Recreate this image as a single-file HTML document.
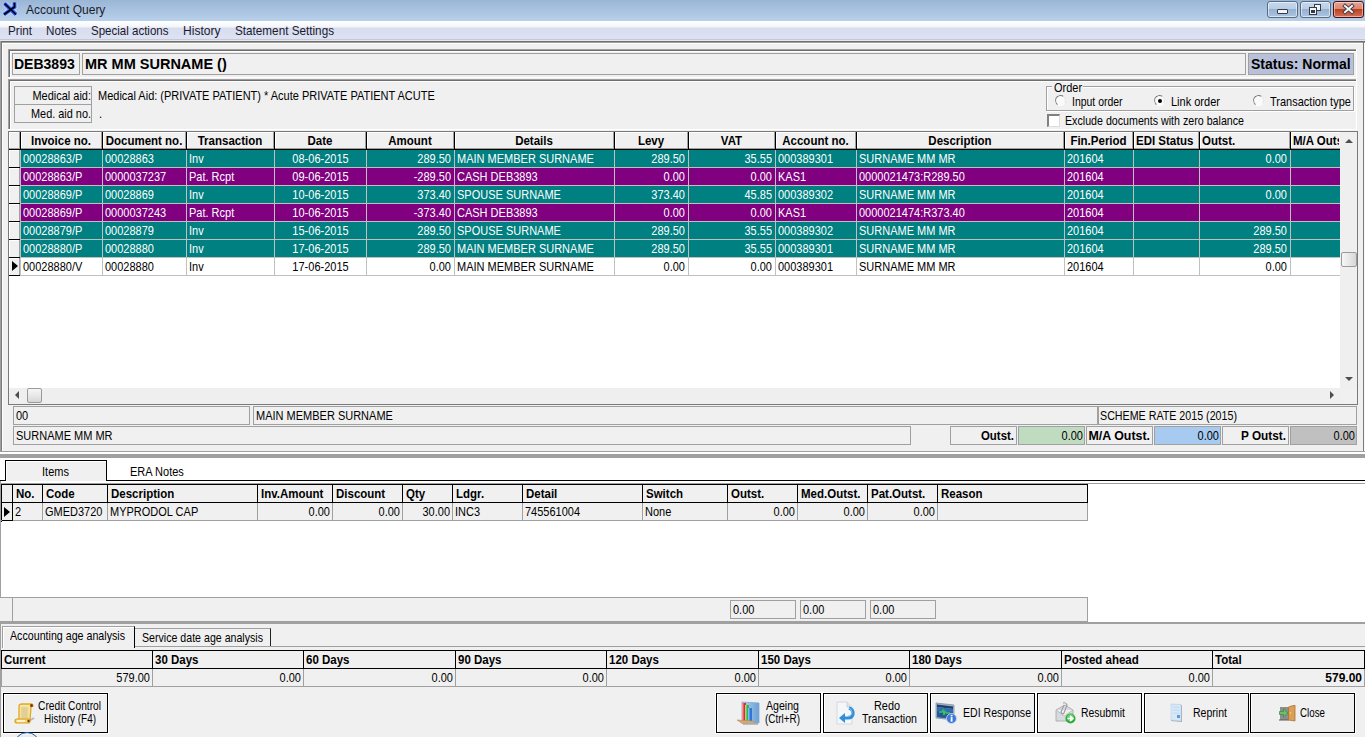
<!DOCTYPE html>
<html><head><meta charset="utf-8"><title>Account Query</title>
<style>
html,body{margin:0;padding:0;}
body{width:1365px;height:737px;position:relative;overflow:hidden;background:#f0f0f0;font-family:"Liberation Sans",sans-serif;font-size:11px;}
body>div,body>svg{position:absolute;}
</style></head><body>
<div style="left:0px;top:0px;width:1365px;height:21px;background:linear-gradient(#9ab6d6,#b8d0ea)"></div>
<div style="left:0px;top:21px;width:1365px;height:18px;background:linear-gradient(#ffffff 0px,#f3f5fb 6px,#d7dcef 7px,#dde2f3 17px)"></div>
<div style="left:0px;top:39px;width:1365px;height:1px;background:#c3c8da"></div>
<div style="left:0px;top:40px;width:1365px;height:1px;background:#e9e9e9"></div>
<div style="left:0px;top:41px;width:1365px;height:413px;background:#f0f0f0"></div>
<div style="left:0px;top:41px;width:1365px;height:1px;background:#6e6e6e"></div>
<div style="left:0px;top:42px;width:1365px;height:1px;background:#a0a0a0"></div>
<div style="left:0px;top:41px;width:1px;height:411px;background:#a0a0a0"></div>
<div style="left:1px;top:41px;width:1px;height:411px;background:#7a7a7a"></div>
<div style="left:2px;top:43px;width:1px;height:408px;background:#ffffff"></div>
<div style="left:2px;top:43px;width:1360px;height:1px;background:#ffffff"></div>
<div style="left:1363px;top:41px;width:1px;height:411px;background:#7a7a7a"></div>
<div style="left:1364px;top:43px;width:1px;height:409px;background:#f8f8f8"></div>
<div style="left:0px;top:451px;width:1365px;height:1px;background:#a0a0a0"></div>
<div style="left:0px;top:452px;width:1365px;height:2px;background:#ffffff"></div>
<div style="left:0px;top:454px;width:1365px;height:4px;background:#a0a0a0"></div>
<div style="left:8px;top:49px;width:1349px;height:1px;background:#a0a0a0"></div>
<div style="left:9px;top:50px;width:1347px;height:1px;background:#6e6e6e"></div>
<div style="left:8px;top:49px;width:1px;height:29px;background:#a0a0a0"></div>
<div style="left:9px;top:50px;width:1px;height:27px;background:#6e6e6e"></div>
<div style="left:10px;top:51px;width:1346px;height:1px;background:#ffffff"></div>
<div style="left:10px;top:51px;width:1px;height:26px;background:#ffffff"></div>
<div style="left:8px;top:77px;width:1349px;height:1px;background:#ffffff"></div>
<div style="left:1356px;top:49px;width:1px;height:29px;background:#ffffff"></div>
<div style="left:8px;top:79px;width:1349px;height:1px;background:#a0a0a0"></div>
<div style="left:9px;top:80px;width:1347px;height:1px;background:#6e6e6e"></div>
<div style="left:8px;top:79px;width:1px;height:51px;background:#a0a0a0"></div>
<div style="left:9px;top:80px;width:1px;height:49px;background:#6e6e6e"></div>
<div style="left:10px;top:81px;width:1346px;height:1px;background:#ffffff"></div>
<div style="left:10px;top:81px;width:1px;height:48px;background:#ffffff"></div>
<div style="left:8px;top:129px;width:1349px;height:1px;background:#ffffff"></div>
<div style="left:1356px;top:79px;width:1px;height:51px;background:#ffffff"></div>
<div style="left:12px;top:53px;width:68px;height:22px;background:#f0f0f0;border:1px solid #a0a0a0;box-sizing:border-box"></div>
<div style="left:14px;top:57px;font-size:14px;line-height:14px;height:14px;color:#000;white-space:nowrap;font-weight:bold;">DEB3893</div>
<div style="left:82px;top:53px;width:1164px;height:22px;background:#f0f0f0;border:1px solid #a0a0a0;box-sizing:border-box"></div>
<div style="left:85px;top:57px;font-size:14.5px;line-height:14.5px;height:14.5px;color:#000;white-space:nowrap;font-weight:bold;">MR MM SURNAME ()</div>
<div style="left:1248px;top:53px;width:106px;height:22px;background:#b9c1d9;border:1px solid #a0a0a0;box-sizing:border-box"></div>
<div style="left:1251px;top:57px;font-size:14px;line-height:14px;height:14px;color:#000;white-space:nowrap;font-weight:bold;">Status: Normal</div>
<div style="left:14px;top:86px;width:78px;height:19px;background:#f0f0f0;border:1px solid #a0a0a0;box-sizing:border-box"></div>
<div style="left:14px;top:104px;width:78px;height:19px;background:#f0f0f0;border:1px solid #a0a0a0;box-sizing:border-box"></div>
<div style="left:14px;top:91px;font-size:11px;line-height:11px;height:11px;color:#000;white-space:nowrap;transform:scale(0.9967,1.12);transform-origin:77px 9px;width:77px;text-align:right;overflow:hidden;">Medical aid:</div>
<div style="left:14px;top:109px;font-size:11px;line-height:11px;height:11px;color:#000;white-space:nowrap;transform:scale(0.9912,1.12);transform-origin:77px 9px;width:77px;text-align:right;overflow:hidden;">Med. aid no.</div>
<div style="left:98px;top:91px;font-size:11px;line-height:11px;height:11px;color:#000;white-space:nowrap;transform:scale(1.0000,1.12);transform-origin:0px 9px;">Medical Aid: (PRIVATE PATIENT) * Acute PRIVATE PATIENT ACUTE</div>
<div style="left:99px;top:109px;font-size:11px;line-height:11px;height:11px;color:#000;white-space:nowrap;transform:scale(1.0000,1.12);transform-origin:0px 9px;">.</div>
<div style="left:1046px;top:86px;width:308px;height:25px;border:1px solid #a0a0a0;box-shadow:inset 1px 1px 0 #fff, 1px 1px 0 #fff;box-sizing:border-box"></div>
<div style="left:1052px;top:85px;width:31px;height:4px;background:#f0f0f0"></div>
<div style="left:1054px;top:83px;font-size:11px;line-height:11px;height:11px;color:#000;white-space:nowrap;transform:scale(1.0000,1.12);transform-origin:0px 9px;">Order</div>
<div style="left:1055px;top:95px;width:11px;height:11px;border-radius:50%;background:#fafafa;border:1.5px solid;border-color:#7a7a7a #e6e6e6 #ffffff #8a8a8a;box-sizing:border-box;transform:rotate(-10deg)"></div>
<div style="left:1072px;top:97px;font-size:11px;line-height:11px;height:11px;color:#000;white-space:nowrap;transform:scale(0.9493,1.12);transform-origin:0px 9px;">Input order</div>
<div style="left:1154px;top:95px;width:11px;height:11px;border-radius:50%;background:#fafafa;border:1.5px solid;border-color:#7a7a7a #e6e6e6 #ffffff #8a8a8a;box-sizing:border-box;transform:rotate(-10deg)"></div>
<div style="left:1158px;top:99px;width:4px;height:4px;border-radius:50%;background:#000"></div>
<div style="left:1171px;top:97px;font-size:11px;line-height:11px;height:11px;color:#000;white-space:nowrap;transform:scale(1.0000,1.12);transform-origin:0px 9px;">Link order</div>
<div style="left:1253px;top:95px;width:11px;height:11px;border-radius:50%;background:#fafafa;border:1.5px solid;border-color:#7a7a7a #e6e6e6 #ffffff #8a8a8a;box-sizing:border-box;transform:rotate(-10deg)"></div>
<div style="left:1270px;top:97px;font-size:11px;line-height:11px;height:11px;color:#000;white-space:nowrap;transform:scale(1.0000,1.12);transform-origin:0px 9px;">Transaction type</div>
<div style="left:1047px;top:114px;width:13px;height:13px;background:#fff;border-top:2px solid #808080;border-left:2px solid #808080;border-right:1px solid #dcdcdc;border-bottom:1px solid #dcdcdc;box-sizing:border-box"></div>
<div style="left:1065px;top:116px;font-size:11px;line-height:11px;height:11px;color:#000;white-space:nowrap;transform:scale(0.9694,1.12);transform-origin:0px 9px;">Exclude documents with zero balance</div>
<div style="left:8px;top:131px;width:1350px;height:274px;background:#fff;border:1px solid #7a7a7a;box-sizing:border-box"></div>
<div style="left:9px;top:132px;width:1331px;height:17px;background:#f0f0f0"></div>
<div style="left:9px;top:149px;width:1331px;height:1px;background:#000"></div>
<div style="left:9px;top:148px;width:1331px;height:1px;background:#a0a0a0"></div>
<div style="left:9px;top:132px;width:1331px;height:1px;background:#ffffff"></div>
<div style="left:9px;top:132px;width:1px;height:16px;background:#ffffff"></div>
<div style="left:19px;top:132px;width:1px;height:17px;background:#a0a0a0"></div>
<div style="left:20px;top:132px;width:1px;height:18px;background:#000"></div>
<div style="left:21px;top:132px;width:1px;height:16px;background:#ffffff"></div>
<div style="left:101px;top:132px;width:1px;height:17px;background:#a0a0a0"></div>
<div style="left:102px;top:132px;width:1px;height:18px;background:#000"></div>
<div style="left:103px;top:132px;width:1px;height:16px;background:#ffffff"></div>
<div style="left:185px;top:132px;width:1px;height:17px;background:#a0a0a0"></div>
<div style="left:186px;top:132px;width:1px;height:18px;background:#000"></div>
<div style="left:187px;top:132px;width:1px;height:16px;background:#ffffff"></div>
<div style="left:273px;top:132px;width:1px;height:17px;background:#a0a0a0"></div>
<div style="left:274px;top:132px;width:1px;height:18px;background:#000"></div>
<div style="left:275px;top:132px;width:1px;height:16px;background:#ffffff"></div>
<div style="left:365px;top:132px;width:1px;height:17px;background:#a0a0a0"></div>
<div style="left:366px;top:132px;width:1px;height:18px;background:#000"></div>
<div style="left:367px;top:132px;width:1px;height:16px;background:#ffffff"></div>
<div style="left:453px;top:132px;width:1px;height:17px;background:#a0a0a0"></div>
<div style="left:454px;top:132px;width:1px;height:18px;background:#000"></div>
<div style="left:455px;top:132px;width:1px;height:16px;background:#ffffff"></div>
<div style="left:613px;top:132px;width:1px;height:17px;background:#a0a0a0"></div>
<div style="left:614px;top:132px;width:1px;height:18px;background:#000"></div>
<div style="left:615px;top:132px;width:1px;height:16px;background:#ffffff"></div>
<div style="left:687px;top:132px;width:1px;height:17px;background:#a0a0a0"></div>
<div style="left:688px;top:132px;width:1px;height:18px;background:#000"></div>
<div style="left:689px;top:132px;width:1px;height:16px;background:#ffffff"></div>
<div style="left:774px;top:132px;width:1px;height:17px;background:#a0a0a0"></div>
<div style="left:775px;top:132px;width:1px;height:18px;background:#000"></div>
<div style="left:776px;top:132px;width:1px;height:16px;background:#ffffff"></div>
<div style="left:855px;top:132px;width:1px;height:17px;background:#a0a0a0"></div>
<div style="left:856px;top:132px;width:1px;height:18px;background:#000"></div>
<div style="left:857px;top:132px;width:1px;height:16px;background:#ffffff"></div>
<div style="left:1063px;top:132px;width:1px;height:17px;background:#a0a0a0"></div>
<div style="left:1064px;top:132px;width:1px;height:18px;background:#000"></div>
<div style="left:1065px;top:132px;width:1px;height:16px;background:#ffffff"></div>
<div style="left:1132px;top:132px;width:1px;height:17px;background:#a0a0a0"></div>
<div style="left:1133px;top:132px;width:1px;height:18px;background:#000"></div>
<div style="left:1134px;top:132px;width:1px;height:16px;background:#ffffff"></div>
<div style="left:1198px;top:132px;width:1px;height:17px;background:#a0a0a0"></div>
<div style="left:1199px;top:132px;width:1px;height:18px;background:#000"></div>
<div style="left:1200px;top:132px;width:1px;height:16px;background:#ffffff"></div>
<div style="left:1289px;top:132px;width:1px;height:17px;background:#a0a0a0"></div>
<div style="left:1290px;top:132px;width:1px;height:18px;background:#000"></div>
<div style="left:1291px;top:132px;width:1px;height:16px;background:#ffffff"></div>
<div style="left:21px;top:136px;font-size:11.5px;line-height:11.5px;height:11.5px;color:#000;white-space:nowrap;transform:scale(1.0000,1.12);transform-origin:40.0px 10px;font-weight:bold;width:80px;text-align:center;overflow:hidden;">Invoice no.</div>
<div style="left:103px;top:136px;font-size:11.5px;line-height:11.5px;height:11.5px;color:#000;white-space:nowrap;transform:scale(1.0000,1.12);transform-origin:41.0px 10px;font-weight:bold;width:82px;text-align:center;overflow:hidden;">Document no.</div>
<div style="left:187px;top:136px;font-size:11.5px;line-height:11.5px;height:11.5px;color:#000;white-space:nowrap;transform:scale(1.0000,1.12);transform-origin:43.0px 10px;font-weight:bold;width:86px;text-align:center;overflow:hidden;">Transaction</div>
<div style="left:275px;top:136px;font-size:11.5px;line-height:11.5px;height:11.5px;color:#000;white-space:nowrap;transform:scale(1.0000,1.12);transform-origin:45.0px 10px;font-weight:bold;width:90px;text-align:center;overflow:hidden;">Date</div>
<div style="left:367px;top:136px;font-size:11.5px;line-height:11.5px;height:11.5px;color:#000;white-space:nowrap;transform:scale(1.0000,1.12);transform-origin:43.0px 10px;font-weight:bold;width:86px;text-align:center;overflow:hidden;">Amount</div>
<div style="left:455px;top:136px;font-size:11.5px;line-height:11.5px;height:11.5px;color:#000;white-space:nowrap;transform:scale(1.0000,1.12);transform-origin:79.0px 10px;font-weight:bold;width:158px;text-align:center;overflow:hidden;">Details</div>
<div style="left:615px;top:136px;font-size:11.5px;line-height:11.5px;height:11.5px;color:#000;white-space:nowrap;transform:scale(1.0000,1.12);transform-origin:36.0px 10px;font-weight:bold;width:72px;text-align:center;overflow:hidden;">Levy</div>
<div style="left:689px;top:136px;font-size:11.5px;line-height:11.5px;height:11.5px;color:#000;white-space:nowrap;transform:scale(1.0000,1.12);transform-origin:42.5px 10px;font-weight:bold;width:85px;text-align:center;overflow:hidden;">VAT</div>
<div style="left:776px;top:136px;font-size:11.5px;line-height:11.5px;height:11.5px;color:#000;white-space:nowrap;transform:scale(1.0000,1.12);transform-origin:39.5px 10px;font-weight:bold;width:79px;text-align:center;overflow:hidden;">Account no.</div>
<div style="left:857px;top:136px;font-size:11.5px;line-height:11.5px;height:11.5px;color:#000;white-space:nowrap;transform:scale(1.0000,1.12);transform-origin:103.0px 10px;font-weight:bold;width:206px;text-align:center;overflow:hidden;">Description</div>
<div style="left:1065px;top:136px;font-size:11.5px;line-height:11.5px;height:11.5px;color:#000;white-space:nowrap;transform:scale(1.0000,1.12);transform-origin:33.5px 10px;font-weight:bold;width:67px;text-align:center;overflow:hidden;">Fin.Period</div>
<div style="left:1136px;top:136px;font-size:11.5px;line-height:11.5px;height:11.5px;color:#000;white-space:nowrap;transform:scale(1.0000,1.12);transform-origin:0px 10px;font-weight:bold;width:62px;text-align:left;overflow:hidden;">EDI Status</div>
<div style="left:1202px;top:136px;font-size:11.5px;line-height:11.5px;height:11.5px;color:#000;white-space:nowrap;transform:scale(1.0000,1.12);transform-origin:0px 10px;font-weight:bold;width:87px;text-align:left;overflow:hidden;">Outst.</div>
<div style="left:1293px;top:136px;font-size:11.5px;line-height:11.5px;height:11.5px;color:#000;white-space:nowrap;transform:scale(1.0000,1.12);transform-origin:0px 10px;font-weight:bold;width:46px;text-align:left;overflow:hidden;">M/A Outst.</div>
<div style="left:21px;top:150px;width:1319px;height:17px;background:#008080"></div>
<div style="left:20px;top:167px;width:1320px;height:1px;background:#c0c0c0"></div>
<div style="left:9px;top:150px;width:11px;height:17px;background:#f0f0f0"></div>
<div style="left:9px;top:150px;width:1px;height:17px;background:#fff"></div>
<div style="left:9px;top:150px;width:10px;height:1px;background:#fff"></div>
<div style="left:19px;top:150px;width:1px;height:17px;background:#a0a0a0"></div>
<div style="left:9px;top:167px;width:11px;height:1px;background:#000"></div>
<div style="left:20px;top:150px;width:1px;height:18px;background:#c0c0c0"></div>
<div style="left:23px;top:154px;font-size:11px;line-height:11px;height:11px;color:#fff;white-space:nowrap;transform:scale(1.0000,1.12);transform-origin:0px 9px;">00028863/P</div>
<div style="left:102px;top:150px;width:1px;height:18px;background:#c0c0c0"></div>
<div style="left:105px;top:154px;font-size:11px;line-height:11px;height:11px;color:#fff;white-space:nowrap;transform:scale(1.0000,1.12);transform-origin:0px 9px;">00028863</div>
<div style="left:186px;top:150px;width:1px;height:18px;background:#c0c0c0"></div>
<div style="left:189px;top:154px;font-size:11px;line-height:11px;height:11px;color:#fff;white-space:nowrap;transform:scale(1.0000,1.12);transform-origin:0px 9px;">Inv</div>
<div style="left:274px;top:150px;width:1px;height:18px;background:#c0c0c0"></div>
<div style="left:275px;top:154px;font-size:11px;line-height:11px;height:11px;color:#fff;white-space:nowrap;transform:scale(1.0000,1.12);transform-origin:45.5px 9px;width:91px;text-align:center;overflow:hidden;">08-06-2015</div>
<div style="left:366px;top:150px;width:1px;height:18px;background:#c0c0c0"></div>
<div style="left:367px;top:154px;font-size:11px;line-height:11px;height:11px;color:#fff;white-space:nowrap;transform:scale(1.0000,1.12);transform-origin:84px 9px;width:84px;text-align:right;overflow:hidden;">289.50</div>
<div style="left:454px;top:150px;width:1px;height:18px;background:#c0c0c0"></div>
<div style="left:457px;top:154px;font-size:11px;line-height:11px;height:11px;color:#fff;white-space:nowrap;transform:scale(1.0000,1.12);transform-origin:0px 9px;">MAIN MEMBER SURNAME</div>
<div style="left:614px;top:150px;width:1px;height:18px;background:#c0c0c0"></div>
<div style="left:615px;top:154px;font-size:11px;line-height:11px;height:11px;color:#fff;white-space:nowrap;transform:scale(1.0000,1.12);transform-origin:70px 9px;width:70px;text-align:right;overflow:hidden;">289.50</div>
<div style="left:688px;top:150px;width:1px;height:18px;background:#c0c0c0"></div>
<div style="left:689px;top:154px;font-size:11px;line-height:11px;height:11px;color:#fff;white-space:nowrap;transform:scale(1.0000,1.12);transform-origin:83px 9px;width:83px;text-align:right;overflow:hidden;">35.55</div>
<div style="left:775px;top:150px;width:1px;height:18px;background:#c0c0c0"></div>
<div style="left:778px;top:154px;font-size:11px;line-height:11px;height:11px;color:#fff;white-space:nowrap;transform:scale(1.0000,1.12);transform-origin:0px 9px;">000389301</div>
<div style="left:856px;top:150px;width:1px;height:18px;background:#c0c0c0"></div>
<div style="left:859px;top:154px;font-size:11px;line-height:11px;height:11px;color:#fff;white-space:nowrap;transform:scale(1.0000,1.12);transform-origin:0px 9px;">SURNAME MM MR</div>
<div style="left:1064px;top:150px;width:1px;height:18px;background:#c0c0c0"></div>
<div style="left:1067px;top:154px;font-size:11px;line-height:11px;height:11px;color:#fff;white-space:nowrap;transform:scale(1.0000,1.12);transform-origin:0px 9px;">201604</div>
<div style="left:1133px;top:150px;width:1px;height:18px;background:#c0c0c0"></div>
<div style="left:1199px;top:150px;width:1px;height:18px;background:#c0c0c0"></div>
<div style="left:1200px;top:154px;font-size:11px;line-height:11px;height:11px;color:#fff;white-space:nowrap;transform:scale(1.0000,1.12);transform-origin:87px 9px;width:87px;text-align:right;overflow:hidden;">0.00</div>
<div style="left:1290px;top:150px;width:1px;height:18px;background:#c0c0c0"></div>
<div style="left:21px;top:168px;width:1319px;height:17px;background:#800080"></div>
<div style="left:20px;top:185px;width:1320px;height:1px;background:#c0c0c0"></div>
<div style="left:9px;top:168px;width:11px;height:17px;background:#f0f0f0"></div>
<div style="left:9px;top:168px;width:1px;height:17px;background:#fff"></div>
<div style="left:9px;top:168px;width:10px;height:1px;background:#fff"></div>
<div style="left:19px;top:168px;width:1px;height:17px;background:#a0a0a0"></div>
<div style="left:9px;top:185px;width:11px;height:1px;background:#000"></div>
<div style="left:20px;top:168px;width:1px;height:18px;background:#c0c0c0"></div>
<div style="left:23px;top:172px;font-size:11px;line-height:11px;height:11px;color:#fff;white-space:nowrap;transform:scale(1.0000,1.12);transform-origin:0px 9px;">00028863/P</div>
<div style="left:102px;top:168px;width:1px;height:18px;background:#c0c0c0"></div>
<div style="left:105px;top:172px;font-size:11px;line-height:11px;height:11px;color:#fff;white-space:nowrap;transform:scale(1.0000,1.12);transform-origin:0px 9px;">0000037237</div>
<div style="left:186px;top:168px;width:1px;height:18px;background:#c0c0c0"></div>
<div style="left:189px;top:172px;font-size:11px;line-height:11px;height:11px;color:#fff;white-space:nowrap;transform:scale(1.0000,1.12);transform-origin:0px 9px;">Pat. Rcpt</div>
<div style="left:274px;top:168px;width:1px;height:18px;background:#c0c0c0"></div>
<div style="left:275px;top:172px;font-size:11px;line-height:11px;height:11px;color:#fff;white-space:nowrap;transform:scale(1.0000,1.12);transform-origin:45.5px 9px;width:91px;text-align:center;overflow:hidden;">09-06-2015</div>
<div style="left:366px;top:168px;width:1px;height:18px;background:#c0c0c0"></div>
<div style="left:367px;top:172px;font-size:11px;line-height:11px;height:11px;color:#fff;white-space:nowrap;transform:scale(1.0000,1.12);transform-origin:84px 9px;width:84px;text-align:right;overflow:hidden;">-289.50</div>
<div style="left:454px;top:168px;width:1px;height:18px;background:#c0c0c0"></div>
<div style="left:457px;top:172px;font-size:11px;line-height:11px;height:11px;color:#fff;white-space:nowrap;transform:scale(1.0000,1.12);transform-origin:0px 9px;">CASH DEB3893</div>
<div style="left:614px;top:168px;width:1px;height:18px;background:#c0c0c0"></div>
<div style="left:615px;top:172px;font-size:11px;line-height:11px;height:11px;color:#fff;white-space:nowrap;transform:scale(1.0000,1.12);transform-origin:70px 9px;width:70px;text-align:right;overflow:hidden;">0.00</div>
<div style="left:688px;top:168px;width:1px;height:18px;background:#c0c0c0"></div>
<div style="left:689px;top:172px;font-size:11px;line-height:11px;height:11px;color:#fff;white-space:nowrap;transform:scale(1.0000,1.12);transform-origin:83px 9px;width:83px;text-align:right;overflow:hidden;">0.00</div>
<div style="left:775px;top:168px;width:1px;height:18px;background:#c0c0c0"></div>
<div style="left:778px;top:172px;font-size:11px;line-height:11px;height:11px;color:#fff;white-space:nowrap;transform:scale(1.0000,1.12);transform-origin:0px 9px;">KAS1</div>
<div style="left:856px;top:168px;width:1px;height:18px;background:#c0c0c0"></div>
<div style="left:859px;top:172px;font-size:11px;line-height:11px;height:11px;color:#fff;white-space:nowrap;transform:scale(1.0000,1.12);transform-origin:0px 9px;">0000021473:R289.50</div>
<div style="left:1064px;top:168px;width:1px;height:18px;background:#c0c0c0"></div>
<div style="left:1067px;top:172px;font-size:11px;line-height:11px;height:11px;color:#fff;white-space:nowrap;transform:scale(1.0000,1.12);transform-origin:0px 9px;">201604</div>
<div style="left:1133px;top:168px;width:1px;height:18px;background:#c0c0c0"></div>
<div style="left:1199px;top:168px;width:1px;height:18px;background:#c0c0c0"></div>
<div style="left:1290px;top:168px;width:1px;height:18px;background:#c0c0c0"></div>
<div style="left:21px;top:186px;width:1319px;height:17px;background:#008080"></div>
<div style="left:20px;top:203px;width:1320px;height:1px;background:#c0c0c0"></div>
<div style="left:9px;top:186px;width:11px;height:17px;background:#f0f0f0"></div>
<div style="left:9px;top:186px;width:1px;height:17px;background:#fff"></div>
<div style="left:9px;top:186px;width:10px;height:1px;background:#fff"></div>
<div style="left:19px;top:186px;width:1px;height:17px;background:#a0a0a0"></div>
<div style="left:9px;top:203px;width:11px;height:1px;background:#000"></div>
<div style="left:20px;top:186px;width:1px;height:18px;background:#c0c0c0"></div>
<div style="left:23px;top:190px;font-size:11px;line-height:11px;height:11px;color:#fff;white-space:nowrap;transform:scale(1.0000,1.12);transform-origin:0px 9px;">00028869/P</div>
<div style="left:102px;top:186px;width:1px;height:18px;background:#c0c0c0"></div>
<div style="left:105px;top:190px;font-size:11px;line-height:11px;height:11px;color:#fff;white-space:nowrap;transform:scale(1.0000,1.12);transform-origin:0px 9px;">00028869</div>
<div style="left:186px;top:186px;width:1px;height:18px;background:#c0c0c0"></div>
<div style="left:189px;top:190px;font-size:11px;line-height:11px;height:11px;color:#fff;white-space:nowrap;transform:scale(1.0000,1.12);transform-origin:0px 9px;">Inv</div>
<div style="left:274px;top:186px;width:1px;height:18px;background:#c0c0c0"></div>
<div style="left:275px;top:190px;font-size:11px;line-height:11px;height:11px;color:#fff;white-space:nowrap;transform:scale(1.0000,1.12);transform-origin:45.5px 9px;width:91px;text-align:center;overflow:hidden;">10-06-2015</div>
<div style="left:366px;top:186px;width:1px;height:18px;background:#c0c0c0"></div>
<div style="left:367px;top:190px;font-size:11px;line-height:11px;height:11px;color:#fff;white-space:nowrap;transform:scale(1.0000,1.12);transform-origin:84px 9px;width:84px;text-align:right;overflow:hidden;">373.40</div>
<div style="left:454px;top:186px;width:1px;height:18px;background:#c0c0c0"></div>
<div style="left:457px;top:190px;font-size:11px;line-height:11px;height:11px;color:#fff;white-space:nowrap;transform:scale(1.0000,1.12);transform-origin:0px 9px;">SPOUSE SURNAME</div>
<div style="left:614px;top:186px;width:1px;height:18px;background:#c0c0c0"></div>
<div style="left:615px;top:190px;font-size:11px;line-height:11px;height:11px;color:#fff;white-space:nowrap;transform:scale(1.0000,1.12);transform-origin:70px 9px;width:70px;text-align:right;overflow:hidden;">373.40</div>
<div style="left:688px;top:186px;width:1px;height:18px;background:#c0c0c0"></div>
<div style="left:689px;top:190px;font-size:11px;line-height:11px;height:11px;color:#fff;white-space:nowrap;transform:scale(1.0000,1.12);transform-origin:83px 9px;width:83px;text-align:right;overflow:hidden;">45.85</div>
<div style="left:775px;top:186px;width:1px;height:18px;background:#c0c0c0"></div>
<div style="left:778px;top:190px;font-size:11px;line-height:11px;height:11px;color:#fff;white-space:nowrap;transform:scale(1.0000,1.12);transform-origin:0px 9px;">000389302</div>
<div style="left:856px;top:186px;width:1px;height:18px;background:#c0c0c0"></div>
<div style="left:859px;top:190px;font-size:11px;line-height:11px;height:11px;color:#fff;white-space:nowrap;transform:scale(1.0000,1.12);transform-origin:0px 9px;">SURNAME MM MR</div>
<div style="left:1064px;top:186px;width:1px;height:18px;background:#c0c0c0"></div>
<div style="left:1067px;top:190px;font-size:11px;line-height:11px;height:11px;color:#fff;white-space:nowrap;transform:scale(1.0000,1.12);transform-origin:0px 9px;">201604</div>
<div style="left:1133px;top:186px;width:1px;height:18px;background:#c0c0c0"></div>
<div style="left:1199px;top:186px;width:1px;height:18px;background:#c0c0c0"></div>
<div style="left:1200px;top:190px;font-size:11px;line-height:11px;height:11px;color:#fff;white-space:nowrap;transform:scale(1.0000,1.12);transform-origin:87px 9px;width:87px;text-align:right;overflow:hidden;">0.00</div>
<div style="left:1290px;top:186px;width:1px;height:18px;background:#c0c0c0"></div>
<div style="left:21px;top:204px;width:1319px;height:17px;background:#800080"></div>
<div style="left:20px;top:221px;width:1320px;height:1px;background:#c0c0c0"></div>
<div style="left:9px;top:204px;width:11px;height:17px;background:#f0f0f0"></div>
<div style="left:9px;top:204px;width:1px;height:17px;background:#fff"></div>
<div style="left:9px;top:204px;width:10px;height:1px;background:#fff"></div>
<div style="left:19px;top:204px;width:1px;height:17px;background:#a0a0a0"></div>
<div style="left:9px;top:221px;width:11px;height:1px;background:#000"></div>
<div style="left:20px;top:204px;width:1px;height:18px;background:#c0c0c0"></div>
<div style="left:23px;top:208px;font-size:11px;line-height:11px;height:11px;color:#fff;white-space:nowrap;transform:scale(1.0000,1.12);transform-origin:0px 9px;">00028869/P</div>
<div style="left:102px;top:204px;width:1px;height:18px;background:#c0c0c0"></div>
<div style="left:105px;top:208px;font-size:11px;line-height:11px;height:11px;color:#fff;white-space:nowrap;transform:scale(1.0000,1.12);transform-origin:0px 9px;">0000037243</div>
<div style="left:186px;top:204px;width:1px;height:18px;background:#c0c0c0"></div>
<div style="left:189px;top:208px;font-size:11px;line-height:11px;height:11px;color:#fff;white-space:nowrap;transform:scale(1.0000,1.12);transform-origin:0px 9px;">Pat. Rcpt</div>
<div style="left:274px;top:204px;width:1px;height:18px;background:#c0c0c0"></div>
<div style="left:275px;top:208px;font-size:11px;line-height:11px;height:11px;color:#fff;white-space:nowrap;transform:scale(1.0000,1.12);transform-origin:45.5px 9px;width:91px;text-align:center;overflow:hidden;">10-06-2015</div>
<div style="left:366px;top:204px;width:1px;height:18px;background:#c0c0c0"></div>
<div style="left:367px;top:208px;font-size:11px;line-height:11px;height:11px;color:#fff;white-space:nowrap;transform:scale(1.0000,1.12);transform-origin:84px 9px;width:84px;text-align:right;overflow:hidden;">-373.40</div>
<div style="left:454px;top:204px;width:1px;height:18px;background:#c0c0c0"></div>
<div style="left:457px;top:208px;font-size:11px;line-height:11px;height:11px;color:#fff;white-space:nowrap;transform:scale(1.0000,1.12);transform-origin:0px 9px;">CASH DEB3893</div>
<div style="left:614px;top:204px;width:1px;height:18px;background:#c0c0c0"></div>
<div style="left:615px;top:208px;font-size:11px;line-height:11px;height:11px;color:#fff;white-space:nowrap;transform:scale(1.0000,1.12);transform-origin:70px 9px;width:70px;text-align:right;overflow:hidden;">0.00</div>
<div style="left:688px;top:204px;width:1px;height:18px;background:#c0c0c0"></div>
<div style="left:689px;top:208px;font-size:11px;line-height:11px;height:11px;color:#fff;white-space:nowrap;transform:scale(1.0000,1.12);transform-origin:83px 9px;width:83px;text-align:right;overflow:hidden;">0.00</div>
<div style="left:775px;top:204px;width:1px;height:18px;background:#c0c0c0"></div>
<div style="left:778px;top:208px;font-size:11px;line-height:11px;height:11px;color:#fff;white-space:nowrap;transform:scale(1.0000,1.12);transform-origin:0px 9px;">KAS1</div>
<div style="left:856px;top:204px;width:1px;height:18px;background:#c0c0c0"></div>
<div style="left:859px;top:208px;font-size:11px;line-height:11px;height:11px;color:#fff;white-space:nowrap;transform:scale(1.0000,1.12);transform-origin:0px 9px;">0000021474:R373.40</div>
<div style="left:1064px;top:204px;width:1px;height:18px;background:#c0c0c0"></div>
<div style="left:1067px;top:208px;font-size:11px;line-height:11px;height:11px;color:#fff;white-space:nowrap;transform:scale(1.0000,1.12);transform-origin:0px 9px;">201604</div>
<div style="left:1133px;top:204px;width:1px;height:18px;background:#c0c0c0"></div>
<div style="left:1199px;top:204px;width:1px;height:18px;background:#c0c0c0"></div>
<div style="left:1290px;top:204px;width:1px;height:18px;background:#c0c0c0"></div>
<div style="left:21px;top:222px;width:1319px;height:17px;background:#008080"></div>
<div style="left:20px;top:239px;width:1320px;height:1px;background:#c0c0c0"></div>
<div style="left:9px;top:222px;width:11px;height:17px;background:#f0f0f0"></div>
<div style="left:9px;top:222px;width:1px;height:17px;background:#fff"></div>
<div style="left:9px;top:222px;width:10px;height:1px;background:#fff"></div>
<div style="left:19px;top:222px;width:1px;height:17px;background:#a0a0a0"></div>
<div style="left:9px;top:239px;width:11px;height:1px;background:#000"></div>
<div style="left:20px;top:222px;width:1px;height:18px;background:#c0c0c0"></div>
<div style="left:23px;top:226px;font-size:11px;line-height:11px;height:11px;color:#fff;white-space:nowrap;transform:scale(1.0000,1.12);transform-origin:0px 9px;">00028879/P</div>
<div style="left:102px;top:222px;width:1px;height:18px;background:#c0c0c0"></div>
<div style="left:105px;top:226px;font-size:11px;line-height:11px;height:11px;color:#fff;white-space:nowrap;transform:scale(1.0000,1.12);transform-origin:0px 9px;">00028879</div>
<div style="left:186px;top:222px;width:1px;height:18px;background:#c0c0c0"></div>
<div style="left:189px;top:226px;font-size:11px;line-height:11px;height:11px;color:#fff;white-space:nowrap;transform:scale(1.0000,1.12);transform-origin:0px 9px;">Inv</div>
<div style="left:274px;top:222px;width:1px;height:18px;background:#c0c0c0"></div>
<div style="left:275px;top:226px;font-size:11px;line-height:11px;height:11px;color:#fff;white-space:nowrap;transform:scale(1.0000,1.12);transform-origin:45.5px 9px;width:91px;text-align:center;overflow:hidden;">15-06-2015</div>
<div style="left:366px;top:222px;width:1px;height:18px;background:#c0c0c0"></div>
<div style="left:367px;top:226px;font-size:11px;line-height:11px;height:11px;color:#fff;white-space:nowrap;transform:scale(1.0000,1.12);transform-origin:84px 9px;width:84px;text-align:right;overflow:hidden;">289.50</div>
<div style="left:454px;top:222px;width:1px;height:18px;background:#c0c0c0"></div>
<div style="left:457px;top:226px;font-size:11px;line-height:11px;height:11px;color:#fff;white-space:nowrap;transform:scale(1.0000,1.12);transform-origin:0px 9px;">SPOUSE SURNAME</div>
<div style="left:614px;top:222px;width:1px;height:18px;background:#c0c0c0"></div>
<div style="left:615px;top:226px;font-size:11px;line-height:11px;height:11px;color:#fff;white-space:nowrap;transform:scale(1.0000,1.12);transform-origin:70px 9px;width:70px;text-align:right;overflow:hidden;">289.50</div>
<div style="left:688px;top:222px;width:1px;height:18px;background:#c0c0c0"></div>
<div style="left:689px;top:226px;font-size:11px;line-height:11px;height:11px;color:#fff;white-space:nowrap;transform:scale(1.0000,1.12);transform-origin:83px 9px;width:83px;text-align:right;overflow:hidden;">35.55</div>
<div style="left:775px;top:222px;width:1px;height:18px;background:#c0c0c0"></div>
<div style="left:778px;top:226px;font-size:11px;line-height:11px;height:11px;color:#fff;white-space:nowrap;transform:scale(1.0000,1.12);transform-origin:0px 9px;">000389302</div>
<div style="left:856px;top:222px;width:1px;height:18px;background:#c0c0c0"></div>
<div style="left:859px;top:226px;font-size:11px;line-height:11px;height:11px;color:#fff;white-space:nowrap;transform:scale(1.0000,1.12);transform-origin:0px 9px;">SURNAME MM MR</div>
<div style="left:1064px;top:222px;width:1px;height:18px;background:#c0c0c0"></div>
<div style="left:1067px;top:226px;font-size:11px;line-height:11px;height:11px;color:#fff;white-space:nowrap;transform:scale(1.0000,1.12);transform-origin:0px 9px;">201604</div>
<div style="left:1133px;top:222px;width:1px;height:18px;background:#c0c0c0"></div>
<div style="left:1199px;top:222px;width:1px;height:18px;background:#c0c0c0"></div>
<div style="left:1200px;top:226px;font-size:11px;line-height:11px;height:11px;color:#fff;white-space:nowrap;transform:scale(1.0000,1.12);transform-origin:87px 9px;width:87px;text-align:right;overflow:hidden;">289.50</div>
<div style="left:1290px;top:222px;width:1px;height:18px;background:#c0c0c0"></div>
<div style="left:21px;top:240px;width:1319px;height:17px;background:#008080"></div>
<div style="left:20px;top:257px;width:1320px;height:1px;background:#c0c0c0"></div>
<div style="left:9px;top:240px;width:11px;height:17px;background:#f0f0f0"></div>
<div style="left:9px;top:240px;width:1px;height:17px;background:#fff"></div>
<div style="left:9px;top:240px;width:10px;height:1px;background:#fff"></div>
<div style="left:19px;top:240px;width:1px;height:17px;background:#a0a0a0"></div>
<div style="left:9px;top:257px;width:11px;height:1px;background:#000"></div>
<div style="left:20px;top:240px;width:1px;height:18px;background:#c0c0c0"></div>
<div style="left:23px;top:244px;font-size:11px;line-height:11px;height:11px;color:#fff;white-space:nowrap;transform:scale(1.0000,1.12);transform-origin:0px 9px;">00028880/P</div>
<div style="left:102px;top:240px;width:1px;height:18px;background:#c0c0c0"></div>
<div style="left:105px;top:244px;font-size:11px;line-height:11px;height:11px;color:#fff;white-space:nowrap;transform:scale(1.0000,1.12);transform-origin:0px 9px;">00028880</div>
<div style="left:186px;top:240px;width:1px;height:18px;background:#c0c0c0"></div>
<div style="left:189px;top:244px;font-size:11px;line-height:11px;height:11px;color:#fff;white-space:nowrap;transform:scale(1.0000,1.12);transform-origin:0px 9px;">Inv</div>
<div style="left:274px;top:240px;width:1px;height:18px;background:#c0c0c0"></div>
<div style="left:275px;top:244px;font-size:11px;line-height:11px;height:11px;color:#fff;white-space:nowrap;transform:scale(1.0000,1.12);transform-origin:45.5px 9px;width:91px;text-align:center;overflow:hidden;">17-06-2015</div>
<div style="left:366px;top:240px;width:1px;height:18px;background:#c0c0c0"></div>
<div style="left:367px;top:244px;font-size:11px;line-height:11px;height:11px;color:#fff;white-space:nowrap;transform:scale(1.0000,1.12);transform-origin:84px 9px;width:84px;text-align:right;overflow:hidden;">289.50</div>
<div style="left:454px;top:240px;width:1px;height:18px;background:#c0c0c0"></div>
<div style="left:457px;top:244px;font-size:11px;line-height:11px;height:11px;color:#fff;white-space:nowrap;transform:scale(1.0000,1.12);transform-origin:0px 9px;">MAIN MEMBER SURNAME</div>
<div style="left:614px;top:240px;width:1px;height:18px;background:#c0c0c0"></div>
<div style="left:615px;top:244px;font-size:11px;line-height:11px;height:11px;color:#fff;white-space:nowrap;transform:scale(1.0000,1.12);transform-origin:70px 9px;width:70px;text-align:right;overflow:hidden;">289.50</div>
<div style="left:688px;top:240px;width:1px;height:18px;background:#c0c0c0"></div>
<div style="left:689px;top:244px;font-size:11px;line-height:11px;height:11px;color:#fff;white-space:nowrap;transform:scale(1.0000,1.12);transform-origin:83px 9px;width:83px;text-align:right;overflow:hidden;">35.55</div>
<div style="left:775px;top:240px;width:1px;height:18px;background:#c0c0c0"></div>
<div style="left:778px;top:244px;font-size:11px;line-height:11px;height:11px;color:#fff;white-space:nowrap;transform:scale(1.0000,1.12);transform-origin:0px 9px;">000389301</div>
<div style="left:856px;top:240px;width:1px;height:18px;background:#c0c0c0"></div>
<div style="left:859px;top:244px;font-size:11px;line-height:11px;height:11px;color:#fff;white-space:nowrap;transform:scale(1.0000,1.12);transform-origin:0px 9px;">SURNAME MM MR</div>
<div style="left:1064px;top:240px;width:1px;height:18px;background:#c0c0c0"></div>
<div style="left:1067px;top:244px;font-size:11px;line-height:11px;height:11px;color:#fff;white-space:nowrap;transform:scale(1.0000,1.12);transform-origin:0px 9px;">201604</div>
<div style="left:1133px;top:240px;width:1px;height:18px;background:#c0c0c0"></div>
<div style="left:1199px;top:240px;width:1px;height:18px;background:#c0c0c0"></div>
<div style="left:1200px;top:244px;font-size:11px;line-height:11px;height:11px;color:#fff;white-space:nowrap;transform:scale(1.0000,1.12);transform-origin:87px 9px;width:87px;text-align:right;overflow:hidden;">289.50</div>
<div style="left:1290px;top:240px;width:1px;height:18px;background:#c0c0c0"></div>
<div style="left:21px;top:258px;width:1319px;height:17px;background:#ffffff"></div>
<div style="left:20px;top:275px;width:1320px;height:1px;background:#c0c0c0"></div>
<div style="left:9px;top:258px;width:11px;height:17px;background:#f0f0f0"></div>
<div style="left:9px;top:258px;width:1px;height:17px;background:#fff"></div>
<div style="left:9px;top:258px;width:10px;height:1px;background:#fff"></div>
<div style="left:19px;top:258px;width:1px;height:17px;background:#a0a0a0"></div>
<div style="left:9px;top:275px;width:11px;height:1px;background:#000"></div>
<div style="left:20px;top:258px;width:1px;height:18px;background:#c0c0c0"></div>
<div style="left:23px;top:262px;font-size:11px;line-height:11px;height:11px;color:#000;white-space:nowrap;transform:scale(1.0000,1.12);transform-origin:0px 9px;">00028880/V</div>
<div style="left:102px;top:258px;width:1px;height:18px;background:#c0c0c0"></div>
<div style="left:105px;top:262px;font-size:11px;line-height:11px;height:11px;color:#000;white-space:nowrap;transform:scale(1.0000,1.12);transform-origin:0px 9px;">00028880</div>
<div style="left:186px;top:258px;width:1px;height:18px;background:#c0c0c0"></div>
<div style="left:189px;top:262px;font-size:11px;line-height:11px;height:11px;color:#000;white-space:nowrap;transform:scale(1.0000,1.12);transform-origin:0px 9px;">Inv</div>
<div style="left:274px;top:258px;width:1px;height:18px;background:#c0c0c0"></div>
<div style="left:275px;top:262px;font-size:11px;line-height:11px;height:11px;color:#000;white-space:nowrap;transform:scale(1.0000,1.12);transform-origin:45.5px 9px;width:91px;text-align:center;overflow:hidden;">17-06-2015</div>
<div style="left:366px;top:258px;width:1px;height:18px;background:#c0c0c0"></div>
<div style="left:367px;top:262px;font-size:11px;line-height:11px;height:11px;color:#000;white-space:nowrap;transform:scale(1.0000,1.12);transform-origin:84px 9px;width:84px;text-align:right;overflow:hidden;">0.00</div>
<div style="left:454px;top:258px;width:1px;height:18px;background:#c0c0c0"></div>
<div style="left:457px;top:262px;font-size:11px;line-height:11px;height:11px;color:#000;white-space:nowrap;transform:scale(1.0000,1.12);transform-origin:0px 9px;">MAIN MEMBER SURNAME</div>
<div style="left:614px;top:258px;width:1px;height:18px;background:#c0c0c0"></div>
<div style="left:615px;top:262px;font-size:11px;line-height:11px;height:11px;color:#000;white-space:nowrap;transform:scale(1.0000,1.12);transform-origin:70px 9px;width:70px;text-align:right;overflow:hidden;">0.00</div>
<div style="left:688px;top:258px;width:1px;height:18px;background:#c0c0c0"></div>
<div style="left:689px;top:262px;font-size:11px;line-height:11px;height:11px;color:#000;white-space:nowrap;transform:scale(1.0000,1.12);transform-origin:83px 9px;width:83px;text-align:right;overflow:hidden;">0.00</div>
<div style="left:775px;top:258px;width:1px;height:18px;background:#c0c0c0"></div>
<div style="left:778px;top:262px;font-size:11px;line-height:11px;height:11px;color:#000;white-space:nowrap;transform:scale(1.0000,1.12);transform-origin:0px 9px;">000389301</div>
<div style="left:856px;top:258px;width:1px;height:18px;background:#c0c0c0"></div>
<div style="left:859px;top:262px;font-size:11px;line-height:11px;height:11px;color:#000;white-space:nowrap;transform:scale(1.0000,1.12);transform-origin:0px 9px;">SURNAME MM MR</div>
<div style="left:1064px;top:258px;width:1px;height:18px;background:#c0c0c0"></div>
<div style="left:1067px;top:262px;font-size:11px;line-height:11px;height:11px;color:#000;white-space:nowrap;transform:scale(1.0000,1.12);transform-origin:0px 9px;">201604</div>
<div style="left:1133px;top:258px;width:1px;height:18px;background:#c0c0c0"></div>
<div style="left:1199px;top:258px;width:1px;height:18px;background:#c0c0c0"></div>
<div style="left:1200px;top:262px;font-size:11px;line-height:11px;height:11px;color:#000;white-space:nowrap;transform:scale(1.0000,1.12);transform-origin:87px 9px;width:87px;text-align:right;overflow:hidden;">0.00</div>
<div style="left:1290px;top:258px;width:1px;height:18px;background:#c0c0c0"></div>
<div style="left:12px;top:261px;width:0;height:0;border-top:5.5px solid transparent;border-bottom:5.5px solid transparent;border-left:6px solid #000"></div>
<div style="left:1340px;top:132px;width:17px;height:256px;background:#efefef"></div>
<div style="left:1341px;top:252px;width:16px;height:15px;background:linear-gradient(90deg,#f6f6f6,#e8e8e8 50%,#d6d6d8);border:1px solid #9a9a9a;border-radius:2px;box-sizing:border-box"></div>
<div style="left:1345px;top:139px;width:0;height:0;border-left:4px solid transparent;border-right:4px solid transparent;border-bottom:4px solid #4d4d4d"></div>
<div style="left:1345px;top:377px;width:0;height:0;border-left:4px solid transparent;border-right:4px solid transparent;border-top:4px solid #4d4d4d"></div>
<div style="left:9px;top:388px;width:1331px;height:16px;background:#efefef"></div>
<div style="left:27px;top:388px;width:15px;height:15px;background:linear-gradient(#f6f6f6,#e8e8e8 50%,#d6d6d8);border:1px solid #9a9a9a;border-radius:2px;box-sizing:border-box"></div>
<div style="left:15px;top:391px;width:0;height:0;border-top:4px solid transparent;border-bottom:4px solid transparent;border-right:4px solid #4d4d4d"></div>
<div style="left:1330px;top:391px;width:0;height:0;border-top:4px solid transparent;border-bottom:4px solid transparent;border-left:4px solid #4d4d4d"></div>
<div style="left:1340px;top:388px;width:17px;height:16px;background:#f0f0f0"></div>
<div style="left:13px;top:406px;width:237px;height:19px;background:#f0f0f0;border:1px solid #a0a0a0;box-sizing:border-box"></div>
<div style="left:16px;top:411px;font-size:11px;line-height:11px;height:11px;color:#000;white-space:nowrap;transform:scale(1.0000,1.12);transform-origin:0px 9px;">00</div>
<div style="left:253px;top:406px;width:845px;height:19px;background:#f0f0f0;border:1px solid #a0a0a0;box-sizing:border-box"></div>
<div style="left:256px;top:411px;font-size:11px;line-height:11px;height:11px;color:#000;white-space:nowrap;transform:scale(1.0000,1.12);transform-origin:0px 9px;">MAIN MEMBER SURNAME</div>
<div style="left:1098px;top:406px;width:259px;height:19px;background:#f0f0f0;border:1px solid #a0a0a0;box-sizing:border-box"></div>
<div style="left:1100px;top:411px;font-size:11px;line-height:11px;height:11px;color:#000;white-space:nowrap;transform:scale(0.9715,1.12);transform-origin:0px 9px;">SCHEME RATE 2015 (2015)</div>
<div style="left:13px;top:426px;width:898px;height:19px;background:#f0f0f0;border:1px solid #a0a0a0;box-sizing:border-box"></div>
<div style="left:16px;top:431px;font-size:11px;line-height:11px;height:11px;color:#000;white-space:nowrap;transform:scale(1.0000,1.12);transform-origin:0px 9px;">SURNAME MM MR</div>
<div style="left:950px;top:426px;width:67px;height:19px;background:#f0f0f0;border:1px solid #a0a0a0;box-sizing:border-box"></div>
<div style="left:950px;top:431px;font-size:11.5px;line-height:11.5px;height:11.5px;color:#000;white-space:nowrap;transform:scale(0.9935,1.12);transform-origin:64px 10px;font-weight:bold;width:64px;text-align:right;overflow:hidden;">Outst.</div>
<div style="left:1018px;top:426px;width:67px;height:19px;background:#c0dcc0;border:1px solid #a0a0a0;box-sizing:border-box"></div>
<div style="left:1018px;top:431px;font-size:11px;line-height:11px;height:11px;color:#000;white-space:nowrap;transform:scale(1.0000,1.12);transform-origin:65px 9px;width:65px;text-align:right;overflow:hidden;">0.00</div>
<div style="left:1086px;top:426px;width:67px;height:19px;background:#f0f0f0;border:1px solid #a0a0a0;box-sizing:border-box"></div>
<div style="left:1086px;top:431px;font-size:11.5px;line-height:11.5px;height:11.5px;color:#000;white-space:nowrap;transform:scale(1.0777,1.12);transform-origin:64px 10px;font-weight:bold;width:64px;text-align:right;overflow:hidden;">M/A Outst.</div>
<div style="left:1154px;top:426px;width:67px;height:19px;background:#a6caf0;border:1px solid #a0a0a0;box-sizing:border-box"></div>
<div style="left:1154px;top:431px;font-size:11px;line-height:11px;height:11px;color:#000;white-space:nowrap;transform:scale(1.0000,1.12);transform-origin:65px 9px;width:65px;text-align:right;overflow:hidden;">0.00</div>
<div style="left:1222px;top:426px;width:67px;height:19px;background:#f0f0f0;border:1px solid #a0a0a0;box-sizing:border-box"></div>
<div style="left:1222px;top:431px;font-size:11.5px;line-height:11.5px;height:11.5px;color:#000;white-space:nowrap;transform:scale(1.0257,1.12);transform-origin:64px 10px;font-weight:bold;width:64px;text-align:right;overflow:hidden;">P Outst.</div>
<div style="left:1290px;top:426px;width:67px;height:19px;background:#c0c0c0;border:1px solid #a0a0a0;box-sizing:border-box"></div>
<div style="left:1290px;top:431px;font-size:11px;line-height:11px;height:11px;color:#000;white-space:nowrap;transform:scale(1.0000,1.12);transform-origin:65px 9px;width:65px;text-align:right;overflow:hidden;">0.00</div>
<div style="left:0px;top:458px;width:1365px;height:166px;background:#fff"></div>
<div style="left:0px;top:481px;width:1px;height:141px;background:#a0a0a0"></div>
<div style="left:5px;top:460px;width:102px;height:21px;background:#f0f0f0;border:1px solid #000;border-bottom:none;box-sizing:border-box;box-shadow:inset 1px 1px 0 #fff"></div>
<div style="left:0px;top:480px;width:6px;height:1px;background:#000"></div>
<div style="left:106px;top:480px;width:1259px;height:1px;background:#000"></div>
<div style="left:0px;top:483px;width:1365px;height:1px;background:#a0a0a0"></div>
<div style="left:5px;top:467px;font-size:11px;line-height:11px;height:11px;color:#000;white-space:nowrap;transform:scale(1.0000,1.12);transform-origin:50.5px 9px;width:101px;text-align:center;overflow:hidden;">Items</div>
<div style="left:130px;top:467px;font-size:11px;line-height:11px;height:11px;color:#000;white-space:nowrap;transform:scale(1.0000,1.12);transform-origin:0px 9px;">ERA Notes</div>
<div style="left:1px;top:484px;width:1087px;height:19px;background:#f0f0f0"></div>
<div style="left:1px;top:484px;width:1087px;height:1px;background:#000"></div>
<div style="left:1px;top:484px;width:1px;height:38px;background:#000"></div>
<div style="left:1087px;top:503px;width:1px;height:18px;background:#a0a0a0"></div>
<div style="left:1087px;top:484px;width:1px;height:19px;background:#000"></div>
<div style="left:1px;top:502px;width:1087px;height:1px;background:#000"></div>
<div style="left:12px;top:484px;width:1px;height:19px;background:#000"></div>
<div style="left:42px;top:484px;width:1px;height:19px;background:#000"></div>
<div style="left:107px;top:484px;width:1px;height:19px;background:#000"></div>
<div style="left:257px;top:484px;width:1px;height:19px;background:#000"></div>
<div style="left:332px;top:484px;width:1px;height:19px;background:#000"></div>
<div style="left:402px;top:484px;width:1px;height:19px;background:#000"></div>
<div style="left:452px;top:484px;width:1px;height:19px;background:#000"></div>
<div style="left:522px;top:484px;width:1px;height:19px;background:#000"></div>
<div style="left:642px;top:484px;width:1px;height:19px;background:#000"></div>
<div style="left:727px;top:484px;width:1px;height:19px;background:#000"></div>
<div style="left:797px;top:484px;width:1px;height:19px;background:#000"></div>
<div style="left:867px;top:484px;width:1px;height:19px;background:#000"></div>
<div style="left:937px;top:484px;width:1px;height:19px;background:#000"></div>
<div style="left:16px;top:489px;font-size:11.5px;line-height:11.5px;height:11.5px;color:#000;white-space:nowrap;transform:scale(1.0000,1.12);transform-origin:0px 10px;font-weight:bold;">No.</div>
<div style="left:46px;top:489px;font-size:11.5px;line-height:11.5px;height:11.5px;color:#000;white-space:nowrap;transform:scale(1.0000,1.12);transform-origin:0px 10px;font-weight:bold;">Code</div>
<div style="left:111px;top:489px;font-size:11.5px;line-height:11.5px;height:11.5px;color:#000;white-space:nowrap;transform:scale(1.0000,1.12);transform-origin:0px 10px;font-weight:bold;">Description</div>
<div style="left:261px;top:489px;font-size:11.5px;line-height:11.5px;height:11.5px;color:#000;white-space:nowrap;transform:scale(1.0000,1.12);transform-origin:0px 10px;font-weight:bold;">Inv.Amount</div>
<div style="left:336px;top:489px;font-size:11.5px;line-height:11.5px;height:11.5px;color:#000;white-space:nowrap;transform:scale(1.0000,1.12);transform-origin:0px 10px;font-weight:bold;">Discount</div>
<div style="left:406px;top:489px;font-size:11.5px;line-height:11.5px;height:11.5px;color:#000;white-space:nowrap;transform:scale(1.0000,1.12);transform-origin:0px 10px;font-weight:bold;">Qty</div>
<div style="left:456px;top:489px;font-size:11.5px;line-height:11.5px;height:11.5px;color:#000;white-space:nowrap;transform:scale(1.0000,1.12);transform-origin:0px 10px;font-weight:bold;">Ldgr.</div>
<div style="left:526px;top:489px;font-size:11.5px;line-height:11.5px;height:11.5px;color:#000;white-space:nowrap;transform:scale(1.0000,1.12);transform-origin:0px 10px;font-weight:bold;">Detail</div>
<div style="left:646px;top:489px;font-size:11.5px;line-height:11.5px;height:11.5px;color:#000;white-space:nowrap;transform:scale(1.0000,1.12);transform-origin:0px 10px;font-weight:bold;">Switch</div>
<div style="left:731px;top:489px;font-size:11.5px;line-height:11.5px;height:11.5px;color:#000;white-space:nowrap;transform:scale(1.0000,1.12);transform-origin:0px 10px;font-weight:bold;">Outst.</div>
<div style="left:801px;top:489px;font-size:11.5px;line-height:11.5px;height:11.5px;color:#000;white-space:nowrap;transform:scale(1.0000,1.12);transform-origin:0px 10px;font-weight:bold;">Med.Outst.</div>
<div style="left:871px;top:489px;font-size:11.5px;line-height:11.5px;height:11.5px;color:#000;white-space:nowrap;transform:scale(1.0000,1.12);transform-origin:0px 10px;font-weight:bold;">Pat.Outst.</div>
<div style="left:941px;top:489px;font-size:11.5px;line-height:11.5px;height:11.5px;color:#000;white-space:nowrap;transform:scale(1.0000,1.12);transform-origin:0px 10px;font-weight:bold;">Reason</div>
<div style="left:2px;top:503px;width:1085px;height:17px;background:#f0f0f0"></div>
<div style="left:1px;top:520px;width:1087px;height:1px;background:#a0a0a0"></div>
<div style="left:12px;top:503px;width:1px;height:18px;background:#000"></div>
<div style="left:2px;top:520px;width:10px;height:1px;background:#000"></div>
<div style="left:42px;top:503px;width:1px;height:18px;background:#a0a0a0"></div>
<div style="left:107px;top:503px;width:1px;height:18px;background:#a0a0a0"></div>
<div style="left:257px;top:503px;width:1px;height:18px;background:#a0a0a0"></div>
<div style="left:332px;top:503px;width:1px;height:18px;background:#a0a0a0"></div>
<div style="left:402px;top:503px;width:1px;height:18px;background:#a0a0a0"></div>
<div style="left:452px;top:503px;width:1px;height:18px;background:#a0a0a0"></div>
<div style="left:522px;top:503px;width:1px;height:18px;background:#a0a0a0"></div>
<div style="left:642px;top:503px;width:1px;height:18px;background:#a0a0a0"></div>
<div style="left:727px;top:503px;width:1px;height:18px;background:#a0a0a0"></div>
<div style="left:797px;top:503px;width:1px;height:18px;background:#a0a0a0"></div>
<div style="left:867px;top:503px;width:1px;height:18px;background:#a0a0a0"></div>
<div style="left:937px;top:503px;width:1px;height:18px;background:#a0a0a0"></div>
<div style="left:4px;top:507px;width:0;height:0;border-top:5px solid transparent;border-bottom:5px solid transparent;border-left:6px solid #000"></div>
<div style="left:15px;top:507px;font-size:11px;line-height:11px;height:11px;color:#000;white-space:nowrap;transform:scale(1.0000,1.12);transform-origin:0px 9px;">2</div>
<div style="left:45px;top:507px;font-size:11px;line-height:11px;height:11px;color:#000;white-space:nowrap;transform:scale(1.0000,1.12);transform-origin:0px 9px;">GMED3720</div>
<div style="left:110px;top:507px;font-size:11px;line-height:11px;height:11px;color:#000;white-space:nowrap;transform:scale(1.0000,1.12);transform-origin:0px 9px;">MYPRODOL CAP</div>
<div style="left:258px;top:507px;font-size:11px;line-height:11px;height:11px;color:#000;white-space:nowrap;transform:scale(1.0000,1.12);transform-origin:72px 9px;width:72px;text-align:right;overflow:hidden;">0.00</div>
<div style="left:333px;top:507px;font-size:11px;line-height:11px;height:11px;color:#000;white-space:nowrap;transform:scale(1.0000,1.12);transform-origin:67px 9px;width:67px;text-align:right;overflow:hidden;">0.00</div>
<div style="left:403px;top:507px;font-size:11px;line-height:11px;height:11px;color:#000;white-space:nowrap;transform:scale(1.0000,1.12);transform-origin:47px 9px;width:47px;text-align:right;overflow:hidden;">30.00</div>
<div style="left:455px;top:507px;font-size:11px;line-height:11px;height:11px;color:#000;white-space:nowrap;transform:scale(1.0000,1.12);transform-origin:0px 9px;">INC3</div>
<div style="left:525px;top:507px;font-size:11px;line-height:11px;height:11px;color:#000;white-space:nowrap;transform:scale(1.0000,1.12);transform-origin:0px 9px;">745561004</div>
<div style="left:645px;top:507px;font-size:11px;line-height:11px;height:11px;color:#000;white-space:nowrap;transform:scale(1.0000,1.12);transform-origin:0px 9px;">None</div>
<div style="left:728px;top:507px;font-size:11px;line-height:11px;height:11px;color:#000;white-space:nowrap;transform:scale(1.0000,1.12);transform-origin:67px 9px;width:67px;text-align:right;overflow:hidden;">0.00</div>
<div style="left:798px;top:507px;font-size:11px;line-height:11px;height:11px;color:#000;white-space:nowrap;transform:scale(1.0000,1.12);transform-origin:67px 9px;width:67px;text-align:right;overflow:hidden;">0.00</div>
<div style="left:868px;top:507px;font-size:11px;line-height:11px;height:11px;color:#000;white-space:nowrap;transform:scale(1.0000,1.12);transform-origin:67px 9px;width:67px;text-align:right;overflow:hidden;">0.00</div>
<div style="left:0px;top:597px;width:1088px;height:25px;background:#f0f0f0"></div>
<div style="left:0px;top:597px;width:1088px;height:1px;background:#a0a0a0"></div>
<div style="left:1087px;top:597px;width:1px;height:25px;background:#a0a0a0"></div>
<div style="left:12px;top:598px;width:1px;height:23px;background:#a0a0a0"></div>
<div style="left:730px;top:600px;width:66px;height:19px;background:#f0f0f0;border:1px solid #a0a0a0;box-sizing:border-box"></div>
<div style="left:733px;top:605px;font-size:11px;line-height:11px;height:11px;color:#000;white-space:nowrap;transform:scale(1.0000,1.12);transform-origin:0px 9px;">0.00</div>
<div style="left:800px;top:600px;width:66px;height:19px;background:#f0f0f0;border:1px solid #a0a0a0;box-sizing:border-box"></div>
<div style="left:803px;top:605px;font-size:11px;line-height:11px;height:11px;color:#000;white-space:nowrap;transform:scale(1.0000,1.12);transform-origin:0px 9px;">0.00</div>
<div style="left:870px;top:600px;width:66px;height:19px;background:#f0f0f0;border:1px solid #a0a0a0;box-sizing:border-box"></div>
<div style="left:873px;top:605px;font-size:11px;line-height:11px;height:11px;color:#000;white-space:nowrap;transform:scale(1.0000,1.12);transform-origin:0px 9px;">0.00</div>
<div style="left:0px;top:621px;width:1088px;height:1px;background:#a0a0a0"></div>
<div style="left:1088px;top:621px;width:277px;height:1px;background:#ffffff"></div>
<div style="left:0px;top:622px;width:1365px;height:2px;background:#a0a0a0"></div>
<div style="left:135px;top:628px;width:136px;height:19px;background:#f0f0f0;border-top:1px solid #a0a0a0;border-right:1px solid #222;box-sizing:border-box"></div>
<div style="left:2px;top:626px;width:133px;height:22px;background:#f0f0f0;border-top:1px solid #a0a0a0;border-left:1px solid #a0a0a0;border-right:1px solid #000;box-sizing:border-box;box-shadow:inset 1px 1px 0 #fff"></div>
<div style="left:135px;top:646px;width:1230px;height:1px;background:#a0a0a0"></div>
<div style="left:10px;top:631px;font-size:11px;line-height:11px;height:11px;color:#000;white-space:nowrap;transform:scale(0.9694,1.12);transform-origin:0px 9px;">Accounting age analysis</div>
<div style="left:142px;top:633px;font-size:11px;line-height:11px;height:11px;color:#000;white-space:nowrap;transform:scale(0.9653,1.12);transform-origin:0px 9px;">Service date age analysis</div>
<div style="left:0px;top:624px;width:1px;height:114px;background:#a0a0a0"></div>
<div style="left:1px;top:650px;width:1364px;height:37px;background:#f0f0f0"></div>
<div style="left:1px;top:650px;width:1364px;height:1px;background:#000"></div>
<div style="left:1px;top:668px;width:1364px;height:1px;background:#000"></div>
<div style="left:1px;top:650px;width:1px;height:19px;background:#000"></div>
<div style="left:1364px;top:650px;width:1px;height:19px;background:#000"></div>
<div style="left:1px;top:669px;width:1px;height:18px;background:#a0a0a0"></div>
<div style="left:1364px;top:669px;width:1px;height:18px;background:#a0a0a0"></div>
<div style="left:1px;top:686px;width:1364px;height:1px;background:#a0a0a0"></div>
<div style="left:152px;top:650px;width:1px;height:19px;background:#000"></div>
<div style="left:152px;top:669px;width:1px;height:18px;background:#a0a0a0"></div>
<div style="left:303px;top:650px;width:1px;height:19px;background:#000"></div>
<div style="left:303px;top:669px;width:1px;height:18px;background:#a0a0a0"></div>
<div style="left:455px;top:650px;width:1px;height:19px;background:#000"></div>
<div style="left:455px;top:669px;width:1px;height:18px;background:#a0a0a0"></div>
<div style="left:606px;top:650px;width:1px;height:19px;background:#000"></div>
<div style="left:606px;top:669px;width:1px;height:18px;background:#a0a0a0"></div>
<div style="left:758px;top:650px;width:1px;height:19px;background:#000"></div>
<div style="left:758px;top:669px;width:1px;height:18px;background:#a0a0a0"></div>
<div style="left:909px;top:650px;width:1px;height:19px;background:#000"></div>
<div style="left:909px;top:669px;width:1px;height:18px;background:#a0a0a0"></div>
<div style="left:1061px;top:650px;width:1px;height:19px;background:#000"></div>
<div style="left:1061px;top:669px;width:1px;height:18px;background:#a0a0a0"></div>
<div style="left:1212px;top:650px;width:1px;height:19px;background:#000"></div>
<div style="left:1212px;top:669px;width:1px;height:18px;background:#a0a0a0"></div>
<div style="left:4px;top:655px;font-size:11.5px;line-height:11.5px;height:11.5px;color:#000;white-space:nowrap;transform:scale(1.0000,1.12);transform-origin:0px 10px;font-weight:bold;">Current</div>
<div style="left:2px;top:673px;font-size:11px;line-height:11px;height:11px;color:#000;white-space:nowrap;transform:scale(1.0000,1.12);transform-origin:148px 9px;width:148px;text-align:right;overflow:hidden;">579.00</div>
<div style="left:155px;top:655px;font-size:11.5px;line-height:11.5px;height:11.5px;color:#000;white-space:nowrap;transform:scale(1.0000,1.12);transform-origin:0px 10px;font-weight:bold;">30 Days</div>
<div style="left:153px;top:673px;font-size:11px;line-height:11px;height:11px;color:#000;white-space:nowrap;transform:scale(1.0000,1.12);transform-origin:148px 9px;width:148px;text-align:right;overflow:hidden;">0.00</div>
<div style="left:306px;top:655px;font-size:11.5px;line-height:11.5px;height:11.5px;color:#000;white-space:nowrap;transform:scale(1.0000,1.12);transform-origin:0px 10px;font-weight:bold;">60 Days</div>
<div style="left:304px;top:673px;font-size:11px;line-height:11px;height:11px;color:#000;white-space:nowrap;transform:scale(1.0000,1.12);transform-origin:149px 9px;width:149px;text-align:right;overflow:hidden;">0.00</div>
<div style="left:458px;top:655px;font-size:11.5px;line-height:11.5px;height:11.5px;color:#000;white-space:nowrap;transform:scale(1.0000,1.12);transform-origin:0px 10px;font-weight:bold;">90 Days</div>
<div style="left:456px;top:673px;font-size:11px;line-height:11px;height:11px;color:#000;white-space:nowrap;transform:scale(1.0000,1.12);transform-origin:148px 9px;width:148px;text-align:right;overflow:hidden;">0.00</div>
<div style="left:609px;top:655px;font-size:11.5px;line-height:11.5px;height:11.5px;color:#000;white-space:nowrap;transform:scale(1.0000,1.12);transform-origin:0px 10px;font-weight:bold;">120 Days</div>
<div style="left:607px;top:673px;font-size:11px;line-height:11px;height:11px;color:#000;white-space:nowrap;transform:scale(1.0000,1.12);transform-origin:149px 9px;width:149px;text-align:right;overflow:hidden;">0.00</div>
<div style="left:761px;top:655px;font-size:11.5px;line-height:11.5px;height:11.5px;color:#000;white-space:nowrap;transform:scale(1.0000,1.12);transform-origin:0px 10px;font-weight:bold;">150 Days</div>
<div style="left:759px;top:673px;font-size:11px;line-height:11px;height:11px;color:#000;white-space:nowrap;transform:scale(1.0000,1.12);transform-origin:148px 9px;width:148px;text-align:right;overflow:hidden;">0.00</div>
<div style="left:912px;top:655px;font-size:11.5px;line-height:11.5px;height:11.5px;color:#000;white-space:nowrap;transform:scale(1.0000,1.12);transform-origin:0px 10px;font-weight:bold;">180 Days</div>
<div style="left:910px;top:673px;font-size:11px;line-height:11px;height:11px;color:#000;white-space:nowrap;transform:scale(1.0000,1.12);transform-origin:149px 9px;width:149px;text-align:right;overflow:hidden;">0.00</div>
<div style="left:1064px;top:655px;font-size:11.5px;line-height:11.5px;height:11.5px;color:#000;white-space:nowrap;transform:scale(1.0000,1.12);transform-origin:0px 10px;font-weight:bold;">Posted ahead</div>
<div style="left:1062px;top:673px;font-size:11px;line-height:11px;height:11px;color:#000;white-space:nowrap;transform:scale(1.0000,1.12);transform-origin:148px 9px;width:148px;text-align:right;overflow:hidden;">0.00</div>
<div style="left:1215px;top:655px;font-size:11.5px;line-height:11.5px;height:11.5px;color:#000;white-space:nowrap;transform:scale(1.0000,1.12);transform-origin:0px 10px;font-weight:bold;">Total</div>
<div style="left:1213px;top:672px;font-size:12px;line-height:12px;height:12px;color:#000;white-space:nowrap;transform:scale(1.0000,1.04);transform-origin:149px 10px;font-weight:bold;width:149px;text-align:right;overflow:hidden;">579.00</div>
<div style="left:3px;top:693px;width:105px;height:40px;background:#f0f0f0;border:1px solid #000;box-sizing:border-box;box-shadow:inset 1px 1px 0 #fff, 0 0 0 1px #fff"></div>
<svg style="left:14px;top:703px" width="21" height="21" viewBox="0 0 21 21"><path d="M13 19 L20 15" stroke="#b8b8b8" stroke-width="2"/><path d="M1 17 L4 16" stroke="#c8c8c8" stroke-width="1"/><path d="M5 3 Q5 1 8 1 L17 1 Q19 1 19 3 L17 4 L16 17 L5 17 Z" fill="#f7e7a3" stroke="#e0a820" stroke-width="1.3"/><rect x="7" y="4" width="7" height="12" fill="#e2cf95" stroke="#ead9a4" stroke-width="0.8"/><path d="M3 16 L14 16 Q16 16 16 18 Q16 20 14 20 L3 20 Q1 20 1 18 Q1 16 3 16 Z" fill="#f6d775" stroke="#dd9e1a" stroke-width="1.2"/><rect x="3" y="17" width="8" height="2" fill="#fff4c8"/><circle cx="17.5" cy="2.5" r="1.5" fill="#7a3a08"/><circle cx="14.5" cy="18" r="1.2" fill="#7a3a08"/></svg>
<div style="left:38px;top:701px;font-size:11px;line-height:11px;height:11px;color:#000;white-space:nowrap;transform:scale(0.9285,1.12);transform-origin:0px 9px;">Credit Control</div>
<div style="left:44px;top:714px;font-size:11px;line-height:11px;height:11px;color:#000;white-space:nowrap;transform:scale(0.9053,1.12);transform-origin:0px 9px;">History (F4)</div>
<div style="left:716px;top:693px;width:105px;height:40px;background:#f0f0f0;border:1px solid #000;box-sizing:border-box;box-shadow:inset 1px 1px 0 #fff, 0 0 0 1px #fff"></div>
<svg style="left:737px;top:701px" width="23" height="24" viewBox="0 0 23 24"><defs><linearGradient id="ga" x1="0" x2="1"><stop offset="0" stop-color="#b7d3ef"/><stop offset="1" stop-color="#6aa0d6"/></linearGradient></defs><path d="M5 1 L22 2 L22 22 L5 21 Z" fill="url(#ga)" stroke="#7fa8d4" stroke-width="0.8"/><rect x="5" y="2" width="4" height="19" fill="#e8262a"/><rect x="5" y="2" width="1.5" height="19" fill="#ff8a8a"/><rect x="8" y="4" width="4" height="17" fill="#2fb844"/><rect x="8" y="4" width="1.5" height="17" fill="#8ae09a"/><rect x="11" y="7" width="4" height="14" fill="#2d77d6"/><rect x="11" y="7" width="1.5" height="14" fill="#8ab8f0"/><path d="M0 19 L15 20 L21 23 L6 23 Z" fill="#d9a872" stroke="#b98a5a" stroke-width="0.6"/><path d="M6 23 L21 23" stroke="#8ab0d8" stroke-width="1"/></svg>
<div style="left:766px;top:701px;font-size:11px;line-height:11px;height:11px;color:#000;white-space:nowrap;transform:scale(0.9635,1.12);transform-origin:0px 9px;">Ageing</div>
<div style="left:765px;top:714px;font-size:11px;line-height:11px;height:11px;color:#000;white-space:nowrap;transform:scale(0.9020,1.12);transform-origin:0px 9px;">(Ctrl+R)</div>
<div style="left:823px;top:693px;width:105px;height:40px;background:#f0f0f0;border:1px solid #000;box-sizing:border-box;box-shadow:inset 1px 1px 0 #fff, 0 0 0 1px #fff"></div>
<svg style="left:836px;top:701px" width="19" height="24" viewBox="0 0 19 24"><path d="M1 1 L11 1 L16 6 L16 23 L1 23 Z" fill="#f4f6f9" stroke="#d4d8de" stroke-width="1"/><path d="M11 1 L11 6 L16 6" fill="#e0e4ea" stroke="#c8ccd4" stroke-width="0.8"/><path d="M13 7 C19 9 18 17 12 17 L8 17" fill="none" stroke="#2f8fd8" stroke-width="3.2"/><path d="M13 7 C17 9 17 15 12 15" fill="none" stroke="#8cc8f4" stroke-width="1"/><path d="M3 17 L9 12 L9 22 Z" fill="#2f8fd8"/></svg>
<div style="left:874px;top:701px;font-size:11px;line-height:11px;height:11px;color:#000;white-space:nowrap;transform:scale(0.9888,1.12);transform-origin:0px 9px;">Redo</div>
<div style="left:862px;top:714px;font-size:11px;line-height:11px;height:11px;color:#000;white-space:nowrap;transform:scale(0.9639,1.12);transform-origin:0px 9px;">Transaction</div>
<div style="left:930px;top:693px;width:105px;height:40px;background:#f0f0f0;border:1px solid #000;box-sizing:border-box;box-shadow:inset 1px 1px 0 #fff, 0 0 0 1px #fff"></div>
<svg style="left:935px;top:702px" width="22" height="22" viewBox="0 0 22 22"><path d="M1 1 L19 3 L19 18 L1 16 Z" fill="#9fb3c4" stroke="#8094a8" stroke-width="0.8"/><path d="M2 2.5 L18 4.5 L18 7 L2 5 Z" fill="#1d3f6e"/><path d="M2 5 L18 7 L18 17 L2 15 Z" fill="#2e6db0"/><path d="M2 9 L18 11 L18 17 L2 15 Z" fill="#245a98"/><path d="M4 10 L7 10 L8 8 L9 13 L10 9 L11 11 L15 11" fill="none" stroke="#3fc060" stroke-width="1.3"/><circle cx="16.5" cy="16.5" r="5" fill="#3f7ad8" stroke="#d0dcf0" stroke-width="0.8"/><rect x="15.7" y="15.2" width="1.8" height="4.5" fill="#fff"/><rect x="15.7" y="12.8" width="1.8" height="1.6" fill="#fff"/></svg>
<div style="left:963px;top:708px;font-size:11px;line-height:11px;height:11px;color:#000;white-space:nowrap;transform:scale(0.9588,1.12);transform-origin:0px 9px;">EDI Response</div>
<div style="left:1037px;top:693px;width:105px;height:40px;background:#f0f0f0;border:1px solid #000;box-sizing:border-box;box-shadow:inset 1px 1px 0 #fff, 0 0 0 1px #fff"></div>
<svg style="left:1055px;top:702px" width="21" height="22" viewBox="0 0 21 22"><path d="M1 8 L10 3 L18 8 L18 19 L1 19 Z" fill="#d8dadd" stroke="#a8acb0" stroke-width="0.9"/><path d="M1 8 L9.5 14 L18 8" fill="#eceef0" stroke="#b0b4b8" stroke-width="0.8"/><path d="M8 1 Q11 0 12 3 L9 11 Q7 13 6 10 L9 3" fill="none" stroke="#9a9ea4" stroke-width="1.1"/><circle cx="15.5" cy="16.5" r="5" fill="#2eaa3a"/><circle cx="15.5" cy="15.5" r="3.5" fill="#5fd068"/><path d="M12.5 16.5 L16 16.5 M15 14 L17.8 16.5 L15 19" stroke="#fff" stroke-width="1.7" fill="none"/></svg>
<div style="left:1081px;top:708px;font-size:11px;line-height:11px;height:11px;color:#000;white-space:nowrap;transform:scale(0.9471,1.12);transform-origin:0px 9px;">Resubmit</div>
<div style="left:1144px;top:693px;width:105px;height:40px;background:#f0f0f0;border:1px solid #000;box-sizing:border-box;box-shadow:inset 1px 1px 0 #fff, 0 0 0 1px #fff"></div>
<svg style="left:1170px;top:703px" width="14" height="20" viewBox="0 0 14 20"><path d="M1 1 L12 2 L12 19 L1 18 Z" fill="#a8a8a8"/><path d="M1 1 L11 1.5 L11 18 L1 17 Z" fill="#d6e8f8" stroke="#b8d0e8" stroke-width="0.6"/><path d="M3 4 L9 4.5 M3 7 L9 7.5 M3 10 L9 10.5" stroke="#c0d8f0" stroke-width="1"/><rect x="7" y="12" width="3" height="3" fill="#5f98d8"/></svg>
<div style="left:1193px;top:708px;font-size:11px;line-height:11px;height:11px;color:#000;white-space:nowrap;transform:scale(0.9589,1.12);transform-origin:0px 9px;">Reprint</div>
<div style="left:1250px;top:693px;width:105px;height:40px;background:#f0f0f0;border:1px solid #000;box-sizing:border-box;box-shadow:inset 1px 1px 0 #fff, 0 0 0 1px #fff"></div>
<svg style="left:1279px;top:705px" width="17" height="17" viewBox="0 0 17 17"><rect x="1" y="2" width="10" height="13" fill="#8e8e8e"/><path d="M0 15 L10 15" stroke="#5a5a5a"/><path d="M9.5 2 L16 0 L16 16 L9.5 15 Z" fill="#d9a058" stroke="#b07030" stroke-width="0.8"/><circle cx="11.5" cy="8" r="0.8" fill="#ffe060"/><path d="M0.5 6.5 L4.5 6.5 L4.5 4 L9 8 L4.5 12 L4.5 9.5 L0.5 9.5 Z" fill="#6cc06c" stroke="#3a8a3a" stroke-width="0.7"/></svg>
<div style="left:1300px;top:708px;font-size:11px;line-height:11px;height:11px;color:#000;white-space:nowrap;transform:scale(0.8890,1.12);transform-origin:0px 9px;">Close</div>
<div style="left:14px;top:732px;width:26px;height:26px;border-radius:50%;border:1.5px solid #1f5a9a;background:linear-gradient(#eef3f8,#a9c1d9);box-sizing:border-box"></div>
<svg style="left:0px;top:0px" width="22" height="20" viewBox="0 0 22 20"><path d="M4.5 3.5 L16 14.5 M14.5 2.5 L14.5 7 L4 14.5" stroke="#d0dcff" stroke-opacity="0.8" stroke-width="5.8" stroke-linejoin="round" fill="none"/><path d="M4.5 3.5 L16 14.5 M14.5 2.5 L14.5 7 L4 14.5" stroke="#2f62ff" stroke-width="3.9" stroke-linejoin="miter" fill="none"/><path d="M4.5 3.5 L16 14.5 M14.5 2.5 L14.5 7 L4 14.5" stroke="#000" stroke-width="1.7" fill="none"/></svg>
<div style="left:26px;top:4px;font-size:12px;line-height:12px;height:12px;color:#1a1a2e;white-space:nowrap;transform:scale(1.0000,1.12);transform-origin:0px 10px;">Account Query</div>
<div style="left:8px;top:25px;font-size:12px;line-height:12px;height:12px;color:#1a1a2e;white-space:nowrap;transform:scale(0.9727,1.05);transform-origin:0px 10px;">Print</div>
<div style="left:46px;top:25px;font-size:12px;line-height:12px;height:12px;color:#1a1a2e;white-space:nowrap;transform:scale(0.9730,1.05);transform-origin:0px 10px;">Notes</div>
<div style="left:91px;top:25px;font-size:12px;line-height:12px;height:12px;color:#1a1a2e;white-space:nowrap;transform:scale(0.9602,1.05);transform-origin:0px 10px;">Special actions</div>
<div style="left:183px;top:25px;font-size:12px;line-height:12px;height:12px;color:#1a1a2e;white-space:nowrap;transform:scale(1.0044,1.05);transform-origin:0px 10px;">History</div>
<div style="left:235px;top:25px;font-size:12px;line-height:12px;height:12px;color:#1a1a2e;white-space:nowrap;transform:scale(0.9765,1.05);transform-origin:0px 10px;">Statement Settings</div>
<div style="left:1267px;top:1px;width:31px;height:17px;background:linear-gradient(#c7d8ec 0%,#b8cde6 45%,#97b1d1 50%,#abc4e0 100%);border:1px solid #5a6a80;border-radius:3px;box-sizing:border-box;box-shadow:inset 0 0 0 1px rgba(255,255,255,0.55)"></div>
<div style="left:1277px;top:9px;width:11px;height:5px;background:#f4f4f4;border:1px solid #333a4a;border-radius:1px;box-sizing:border-box"></div>
<div style="left:1300px;top:1px;width:31px;height:17px;background:linear-gradient(#c7d8ec 0%,#b8cde6 45%,#97b1d1 50%,#abc4e0 100%);border:1px solid #5a6a80;border-radius:3px;box-sizing:border-box;box-shadow:inset 0 0 0 1px rgba(255,255,255,0.55)"></div>
<div style="left:1314px;top:4px;width:7px;height:7px;background:#f4f4f4;border:1px solid #333a4a;box-sizing:border-box"></div><div style="left:1309px;top:7px;width:8px;height:8px;background:#f4f4f4;border:1px solid #333a4a;box-sizing:border-box"></div><div style="left:1311px;top:10px;width:4px;height:3px;background:#333a4a"></div>
<div style="left:1333px;top:1px;width:31px;height:17px;background:linear-gradient(#e8a18f 0%,#d98a74 45%,#c0401e 50%,#d0705a 100%);border:1px solid #4a1010;border-radius:3px;box-sizing:border-box;box-shadow:inset 0 0 0 1px rgba(255,255,255,0.45)"></div>
<svg style="left:1341px;top:3px" width="15" height="12" viewBox="0 0 15 12"><path d="M4 3 L11 9 M11 3 L4 9" stroke="#3a3a4a" stroke-width="3.8" stroke-linecap="square"/><path d="M4 3 L11 9 M11 3 L4 9" stroke="#f6f6f6" stroke-width="2" stroke-linecap="square"/></svg>
</body></html>
